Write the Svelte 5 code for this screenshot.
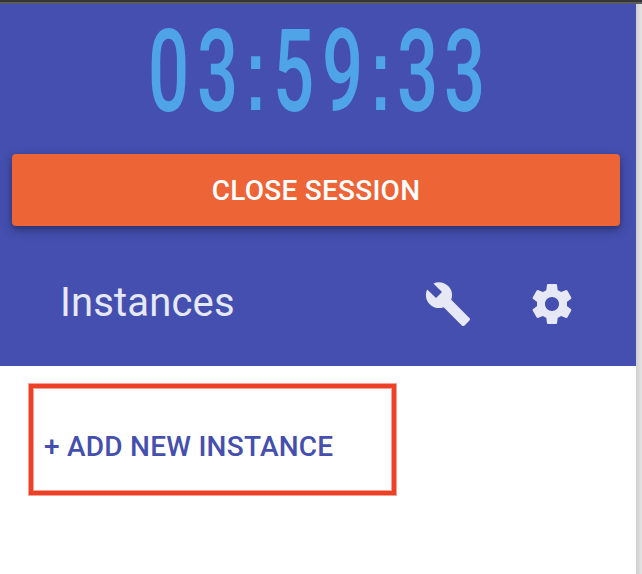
<script>
  const time = '03:59:33';
</script>

<div class="window">
  <div class="topbar"></div>
  <div class="body">
    <main>
      <header>
        <div class="timer">
          {#each time.split('') as c}<span class:colon={c === ':'}><b>{c}</b></span>{/each}
        </div>
        <button class="close">CLOSE SESSION</button>
        <div class="toolbar">
          <h1>Instances</h1>
          <svg class="build" viewBox="0 0 24 24"><path d="M22.7 19l-9.1-9.1c.9-2.3.4-5-1.5-6.9-2-2-5-2.4-7.4-1.3L9 6 6 9 1.6 4.7C.4 7.1.9 10.1 2.9 12.1c1.9 1.9 4.6 2.4 6.9 1.5l9.1 9.1c.4.4 1 .4 1.4 0l2.3-2.3c.5-.4.5-1.1.1-1.4z" /></svg>
          <svg viewBox="0 0 24 24"><path d="M19.43 12.98c.04-.32.07-.64.07-.98s-.03-.66-.07-.98l2.11-1.65c.19-.15.24-.42.12-.64l-2-3.46c-.12-.22-.39-.3-.61-.22l-2.49 1c-.52-.4-1.08-.73-1.69-.98l-.38-2.65C14.46 2.18 14.25 2 14 2h-4c-.25 0-.46.18-.49.42l-.38 2.65c-.61.25-1.17.59-1.69.98l-2.49-1c-.23-.09-.49 0-.61.22l-2 3.46c-.13.22-.07.49.12.64l2.11 1.65c-.04.32-.07.65-.07.98s.03.66.07.98l-2.11 1.65c-.19.15-.24.42-.12.64l2 3.46c.12.22.39.3.61.22l2.49-1c.52.4 1.08.73 1.69.98l.38 2.65c.03.24.24.42.49.42h4c.25 0 .46-.18.49-.42l.38-2.65c.61-.25 1.17-.59 1.69-.98l2.49 1c.23.09.49 0 .61-.22l2-3.46c.12-.22.07-.49-.12-.64l-2.11-1.65zM12 15.5c-1.93 0-3.5-1.57-3.5-3.5s1.57-3.5 3.5-3.5 3.5 1.57 3.5 3.5-1.57 3.5-3.5 3.5z" /></svg>
        </div>
      </header>
      <section>
        <button class="add">+ ADD NEW INSTANCE</button>
      </section>
    </main>
    <aside></aside>
  </div>
</div>

<style>
  .window {
    width: 642px;
    height: 574px;
    display: flex;
    flex-direction: column;
    overflow: hidden;
    background: #fff;
    font-family: Roboto, sans-serif;
  }
  .topbar {
    height: 2px;
    flex: none;
    background: #353538;
    border-bottom: 2px solid #5c5c5f;
  }
  .body {
    flex: 1;
    display: flex;
  }
  main {
    width: 636px;
  }
  aside {
    flex: 1;
    background: linear-gradient(90deg, #cfcfcf, #e4e4e4);
  }
  header {
    height: 362px;
    box-sizing: border-box;
    background: #444faf;
    padding: 24px 16px 0 12px;
  }
  .timer {
    height: 84px;
    display: flex;
    margin-left: 132px;
    color: #4fa3e7;
    font-size: 115px;
    line-height: 87px;
  }
  .timer span {
    width: 49px;
    display: flex;
    justify-content: center;
  }
  .timer span:nth-child(n + 7) {
    width: 47px;
  }
  .timer .colon {
    width: 27px;
    font-family: "DejaVu Sans", sans-serif;
    font-size: 104px;
    line-height: 92px;
  }
  .timer b {
    font-weight: 500;
    transform: scaleX(0.63);
  }
  .timer .colon b {
    font-weight: 400;
    transform: scaleX(0.85);
  }
  button {
    display: block;
    border: 0;
    margin: 0;
    font: 500 28px Roboto, sans-serif;
    white-space: nowrap;
  }
  .close {
    width: 608px;
    height: 72px;
    margin-top: 42px;
    padding: 0;
    border-radius: 4px;
    background: #ed6437;
    color: #fff;
    letter-spacing: 0.25px;
    box-shadow: 0 3px 5px rgba(0, 0, 0, 0.2), 0 4px 12px rgba(0, 0, 0, 0.24);
  }
  .toolbar {
    height: 156px;
    display: flex;
    align-items: center;
    padding-left: 48px;
    color: #e6e8f6;
  }
  h1 {
    width: 364px;
    margin: 0;
    font-size: 40px;
    font-weight: 400;
    line-height: 46px;
    padding-bottom: 2px;
    letter-spacing: 0.15px;
  }
  svg {
    width: 48px;
    height: 48px;
    fill: currentColor;
  }
  .build {
    margin-right: 56px;
  }
  section {
    padding: 18px 0 0 29px;
  }
  .add {
    width: 367px;
    height: 111px;
    box-sizing: border-box;
    padding: 13px 0 0 11px;
    border: 4px solid #ec4027;
    box-shadow: 0 0 0 1px #f5a196, inset 0 0 0 1px #f5a196;
    background: #fff;
    color: #444fae;
    text-align: left;
    letter-spacing: 0.25px;
  }
</style>
